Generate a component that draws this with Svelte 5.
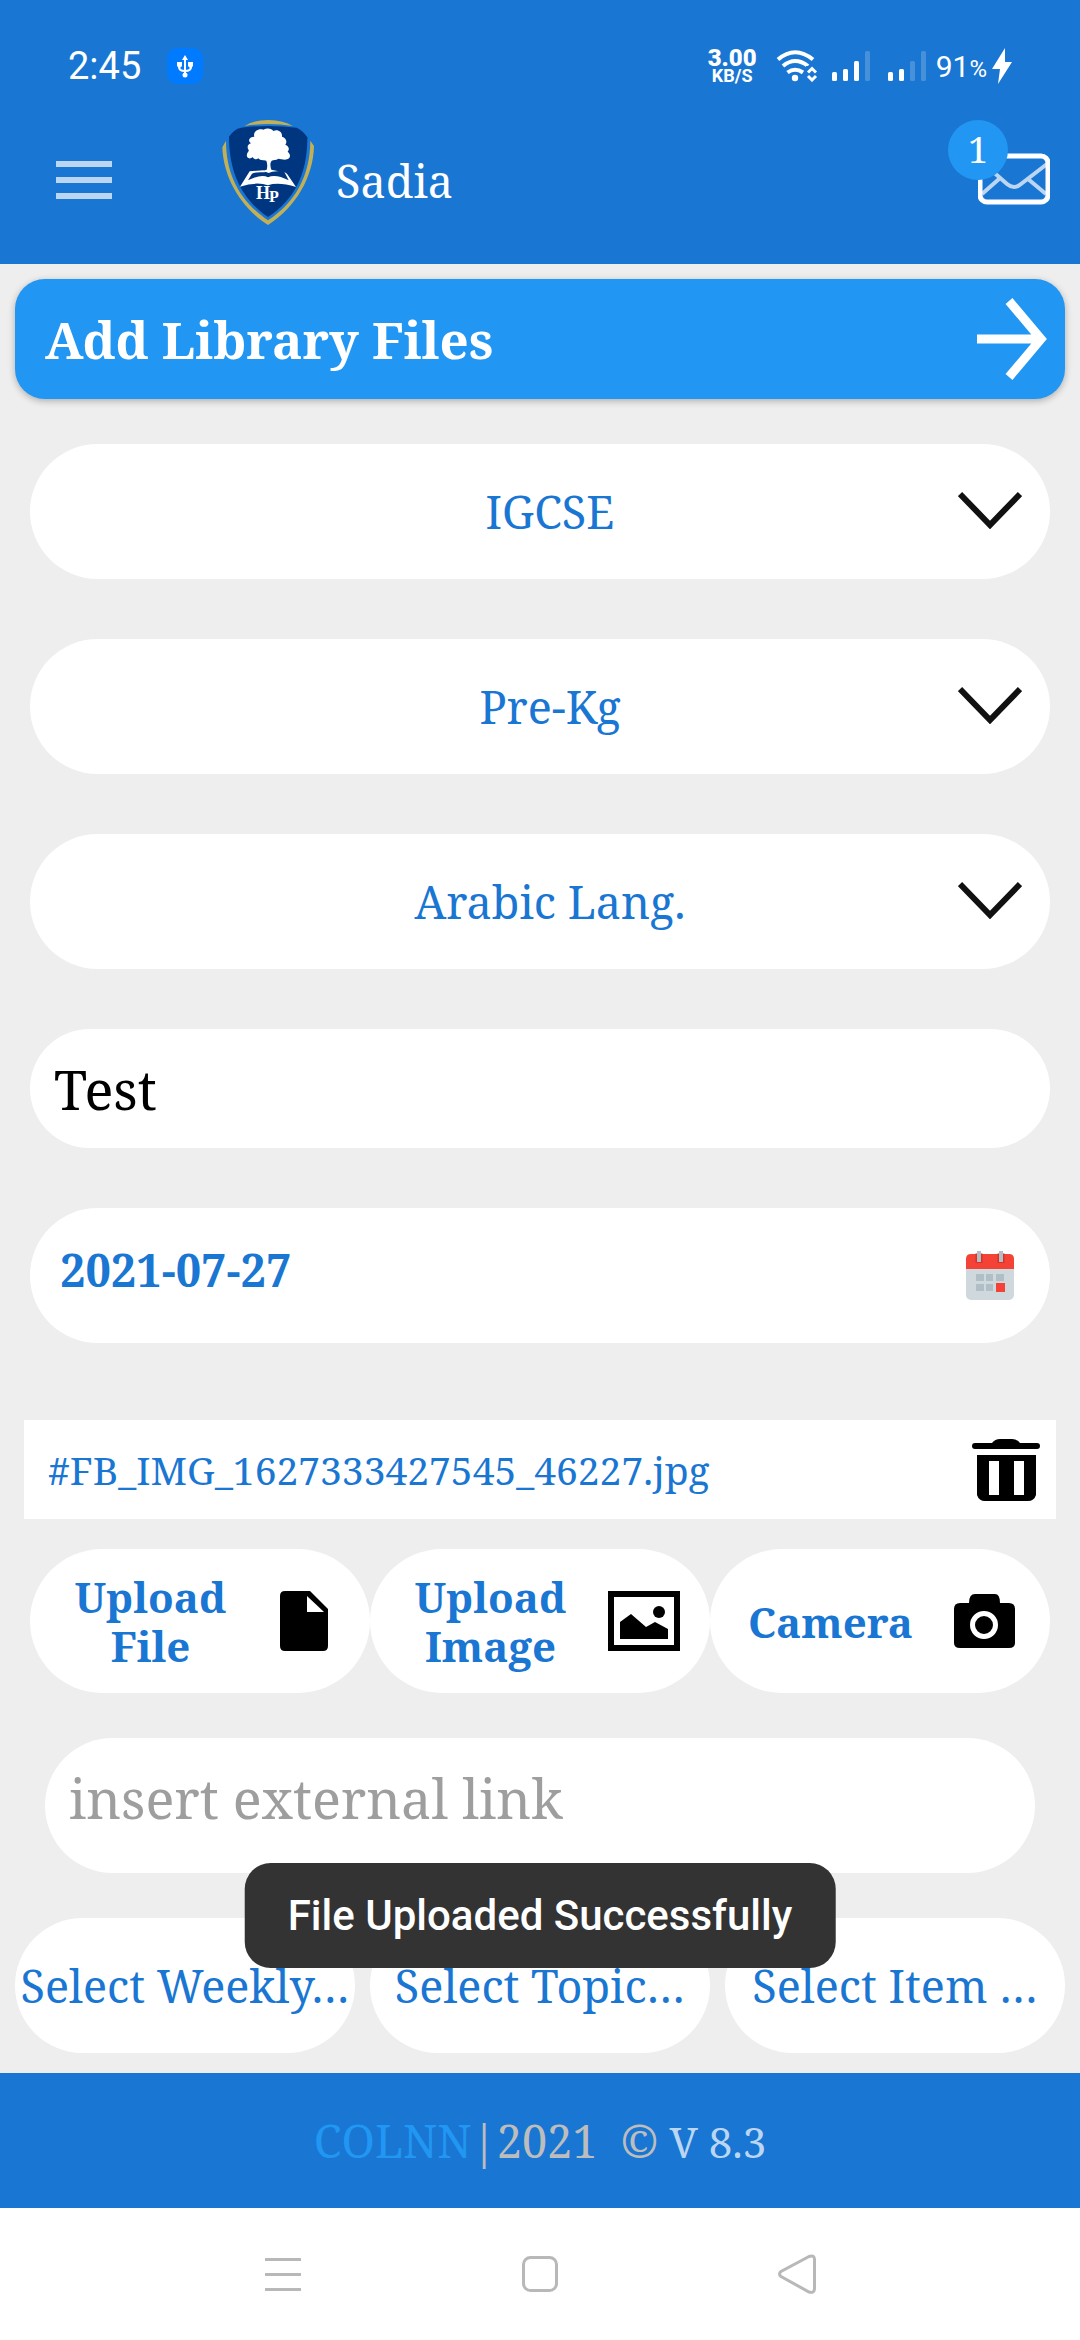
<script>
  const pickers = [
    { id: 'system', label: 'School system', value: 'IGCSE' },
    { id: 'grade', label: 'Grade', value: 'Pre-Kg' },
    { id: 'subject', label: 'Subject', value: 'Arabic Lang.' }
  ];
  const uploads = [
    { icon: 'file', text: 'Upload File' },
    { icon: 'image', text: 'Upload Image' },
    { icon: 'camera', text: 'Camera' }
  ];
  const filters = [
    { id: 'weekly', label: 'Weekly plan', value: 'Select Weekly…' },
    { id: 'topic', label: 'Topic', value: 'Select Topic…' },
    { id: 'item', label: 'Item', value: 'Select Item …' }
  ];
  let title = $state('Test');
  let date = $state('2021-07-27');
  let link = $state('');
</script>

<div class="screen">
  <header>
    <div class="status">
      <div class="status-side">
        <span class="clock">2:45</span>
        <svg class="usb" viewBox="0 0 36 36" aria-hidden="true">
          <rect width="36" height="36" rx="10" fill="#007aff" />
          <g fill="none" stroke="#fff" stroke-width="2"><path d="M18 10v17M12 17v2q0 4 6 4t6-4v-2" /></g>
          <path d="M18 7l3 5h-6zM10 14h5v4l-2 2h-1l-2-2zM21 14h5v4l-2 2h-1l-2-2z" fill="#fff" />
          <circle cx="18" cy="27" r="2.5" fill="#fff" />
        </svg>
      </div>
      <div class="status-side right">
        <span class="speed"><b>3.00</b><small>KB/S</small></span>
        <svg class="wifi" viewBox="0 0 42 32" aria-hidden="true">
          <g fill="none" stroke="#fff" stroke-width="4">
            <path d="M2 9.500Q19 -5 37 9.500M7 16Q19 6 32 16M11.500 22.500Q19 17 27 22.500" />
          </g>
          <circle cx="19" cy="28" r="3.200" fill="#fff" />
          <rect x="30" y="16" width="12" height="16" fill="#1976d2" />
          <path d="M32 22.500l4-4 4 4M32 26l4 4 4-4" fill="none" stroke="#fff" stroke-width="3" />
        </svg>
        <svg class="bars" viewBox="0 0 96 32" fill="#fff" aria-hidden="true">
          <rect x="0" y="22" width="5" height="9" rx="1.500" />
          <rect x="11" y="19" width="5" height="12" rx="1.500" />
          <rect x="22" y="11" width="5" height="20" rx="1.500" />
          <rect x="33" y="1" width="5" height="30" rx="1.500" opacity=".2" />
          <rect x="56" y="22" width="5" height="9" rx="1.500" />
          <rect x="67" y="19" width="5" height="12" rx="1.500" />
          <rect x="78" y="11" width="5" height="20" rx="1.500" opacity=".2" />
          <rect x="89" y="1" width="5" height="30" rx="1.500" opacity=".2" />
        </svg>
        <span class="battery">91<small>%</small></span>
        <svg class="bolt" viewBox="0 0 20 36" aria-hidden="true"><path d="M13 0L0 21h8L6 36 20 14h-7z" fill="#fff" /></svg>
      </div>
    </div>

    <div class="toolbar">
      <button class="menu" aria-label="Open menu">
        <svg viewBox="0 0 56 38" fill="#bbd6f2"><path d="M0 0h56v6H0zM0 16h56v6H0zM0 32h56v6H0z" /></svg>
      </button>
      <svg class="logo" viewBox="36 30 276 360" role="img" aria-label="School crest">
        <g fill="#c3b056">
          <path d="M104 48Q128 31 175 30Q222 31 248 48Q212 42 175 42Q138 42 104 48z" />
          <path d="M48 92L37 112C40 200 90 292 174 345C258 292 310 200 312 108L301 92C300 200 255 277 174 331C95 277 48 200 48 92z" />
        </g>
        <path d="M57 80Q72 57 93 53Q175 43 260 53Q279 62 292 82C292 195 252 270 174 321C98 270 57 190 57 80z" fill="#003580" />
        <g fill="#fff">
          <path d="M133 80C128 65 145 54 160 59C172 52 186 56 190 63C202 56 218 65 216 80C228 83 233 95 226 104C236 108 240 118 233 125C243 132 242 146 231 148C222 151 212 146 205 146C198 151 190 149 185 152C179 160 181 170 184 179L206 184Q186 183 176 189Q166 183 145 186L170 179Q174 166 169 152C160 151 150 152 145 145C137 151 128 145 129 141C119 149 108 145 111 133C112 126 118 124 116 120C110 112 113 102 123 100C111 91 119 80 133 80z" />
          <path d="M119 184L160 181L165 187Q135 185 126 191L114 211Q155 190 174 202Q196 190 236 211L223 186L231 191L258 231Q205 215 174 226Q140 214 90 230z" />
        </g>
        <text x="138" y="268" class="crest-h">H</text>
        <text x="177" y="276" class="crest-p">P</text>
      </svg>
      <h1>Sadia</h1>
      <button class="mail" aria-label="Messages, 1 unread">
        <svg viewBox="0 0 72 54" fill="none" stroke="#fff">
          <rect x="2" y="3" width="68" height="46" rx="7" stroke-width="5" />
          <path d="M4 9L29 31Q36 37 43 31L69 11M4 41L21 26M50 26L68 41" stroke-width="4" opacity=".7" />
        </svg>
        <span class="badge">1</span>
      </button>
    </div>
  </header>

  <main>
    <button class="banner">
      <span>Add Library Files</span>
      <svg viewBox="0 0 70 84" aria-hidden="true"><path d="M0 42H64M32 4L64 42L32 80" fill="none" stroke="#fff" stroke-width="9" /></svg>
    </button>

    <div class="fields">
      {#each pickers as p}
        <div class="pill picker">
          <select id={p.id} aria-label={p.label}><option>{p.value}</option></select>
          <svg viewBox="0 0 64 38" aria-hidden="true"><path d="M2 3L32 34L62 3" fill="none" stroke="#111" stroke-width="6" /></svg>
        </div>
      {/each}
      <input class="pill title" aria-label="Title" type="text" bind:value={title} />
      <div class="pill date">
        <input aria-label="Date" type="text" bind:value={date} />
        <button aria-label="Pick a date">
          <svg viewBox="0 0 48 50">
            <rect y="4" width="48" height="45" rx="5" fill="#cfd8dc" />
            <path d="M0 18V8q0-5 5-5h38q5 0 5 5v10z" fill="#f44336" />
            <path d="M13 2v10M35 2v10" stroke="#b71c1c" stroke-width="7" opacity=".45" />
            <path d="M13 0v11M35 0v11" stroke="#b0bec5" stroke-width="4" />
            <path d="M10 23h8v7h-8zM20 23h7v7h-7zM30 23h8v7h-8zM10 33h8v7h-8zM20 33h7v7h-7z" fill="#b0bec5" />
            <path d="M30 32h9v9h-9z" fill="#f44336" />
          </svg>
        </button>
      </div>
    </div>

    <div class="attachment">
      <a href="#file">#FB_IMG_1627333427545_46227.jpg</a>
      <button aria-label="Delete file">
        <svg viewBox="0 0 68 62"><path fill-rule="evenodd" d="M20 4q3-4 8-4h12q5 0 8 4h17q3 0 3 3t-3 3H3q-3 0-3-3t3-3zM5 16h59v40q-2 6-8 6H13q-6 0-8-6zM17 22v34h10V22zM42 22v34h10V22z" /></svg>
      </button>
    </div>

    <div class="uploads">
      {#each uploads as u}
        <button class="pill">
          <span>{u.text}</span>
          {#if u.icon === 'file'}
            <svg viewBox="0 0 72 60" aria-hidden="true"><path fill-rule="evenodd" d="M17 0h25l18 18v37q0 5-5 5H17q-5 0-5-5V5q0-5 5-5zM39 5v16h17z" /></svg>
          {:else if u.icon === 'image'}
            <svg viewBox="0 0 72 60" aria-hidden="true">
              <path fill-rule="evenodd" d="M0 0h72v60H0zM6 6v48h60V6z" />
              <path d="M12 48V31l11-8 15 13 9-5 13 7v10z" /><circle cx="51" cy="21" r="6" />
            </svg>
          {:else}
            <svg viewBox="0 0 72 60" aria-hidden="true">
              <path d="M21 3h20q5 0 5 9h9q6 0 6 6v34q0 5-6 5H6q-6 0-6-5V18q0-6 6-6h9q0-9 6-9z" transform="translate(6)" />
              <circle cx="36" cy="34" r="11.500" fill="none" stroke="#fff" stroke-width="5" />
            </svg>
          {/if}
        </button>
      {/each}
    </div>

    <div class="link-row">
      <input class="pill" type="url" aria-label="External link" placeholder="insert external link" bind:value={link} />
    </div>

    <div class="filters">
      {#each filters as f}
        <select class="pill" id={f.id} aria-label={f.label}><option>{f.value}</option></select>
      {/each}
      <div class="toast" role="status">File Uploaded Successfully</div>
    </div>
  </main>

  <footer>
    <p><span class="brand">COLNN</span><span>|</span><span>2021</span><span class="copy">©</span><span class="version">V 8.3</span></p>
  </footer>

  <nav>
    <button aria-label="Recent apps"><svg viewBox="0 0 40 40" fill="#b8b8b8"><path d="M2 4h36v3H2zM2 19h36v3H2zM2 34h36v3H2z" /></svg></button>
    <button aria-label="Home"><svg viewBox="0 0 40 40"><rect x="3.500" y="3.500" width="33" height="33" rx="7" /></svg></button>
    <button aria-label="Back"><svg viewBox="0 0 40 40"><path d="M32 2.500L4 17.500Q1 20 4 22.500L32 38Q37 39.500 37.500 35V5Q37 .500 32 2.500z" /></svg></button>
  </nav>
</div>

<style>
  :global(body) {
    margin: 0;
  }
  .screen {
    min-height: 100vh;
    display: flex;
    flex-direction: column;
    background: #eee;
    color: #1976d2;
    font-family: 'Noto Serif', 'Droid Serif', 'DejaVu Serif Condensed', 'DejaVu Serif', serif;
    font-size: 45px;
  }
  button,
  input,
  select {
    box-sizing: border-box;
    margin: 0;
    padding: 0;
    border: 0;
    outline: 0;
    background: none;
    color: inherit;
    font: inherit;
    appearance: none;
  }
  svg {
    display: block;
    flex: none;
  }
  header {
    background: #1976d2;
    color: #fff;
  }
  .status {
    display: flex;
    justify-content: space-between;
    align-items: center;
    height: 36px;
    padding: 48px 68px 12px;
    font-family: Roboto, sans-serif;
  }
  .status-side {
    display: flex;
    align-items: center;
    gap: 26px;
  }
  .right {
    gap: 0;
  }
  .clock {
    font-size: 38px;
  }
  .usb {
    width: 36px;
    height: 36px;
  }
  .speed {
    display: flex;
    flex-direction: column;
    align-items: center;
    font-size: 24px;
    line-height: 20px;
    font-weight: 700;
  }
  .speed small {
    font-size: 18px;
    line-height: 16px;
  }
  .wifi {
    width: 42px;
    height: 32px;
    margin: 0 14px 0 19px;
  }
  .bars {
    width: 96px;
    height: 32px;
  }
  .battery {
    margin: 0 5px 0 8px;
    font-size: 30px;
  }
  .battery small {
    font-size: 24px;
  }
  .bolt {
    width: 20px;
    height: 36px;
  }
  .toolbar {
    display: flex;
    align-items: center;
    height: 168px;
    padding: 0 30px 0 56px;
  }
  .menu svg {
    width: 56px;
    height: 38px;
  }
  .logo {
    width: 92px;
    height: 120px;
    margin: 0 22px 0 110px;
  }
  .crest-h,
  .crest-p {
    fill: #fff;
    font-family: 'Liberation Serif', serif;
    font-size: 54px;
    font-weight: 700;
  }
  .crest-p {
    font-size: 48px;
  }
  h1 {
    margin: 0;
    flex: 1;
    font-size: 45px;
    font-weight: 400;
  }
  .mail {
    position: relative;
  }
  .mail svg {
    width: 72px;
    height: 54px;
  }
  .badge {
    position: absolute;
    top: -33px;
    left: -30px;
    width: 60px;
    height: 60px;
    border-radius: 50%;
    background: #2196f3;
    font-size: 36px;
    line-height: 60px;
    text-align: center;
  }
  main {
    flex: 1;
    display: flex;
    flex-direction: column;
    padding: 15px 15px 20px;
  }
  .banner {
    display: flex;
    align-items: center;
    justify-content: space-between;
    height: 120px;
    padding: 0 18px 0 30px;
    border-radius: 30px;
    background: #2196f3;
    box-shadow: 0 2px 7px rgba(0, 0, 0, 0.28);
    color: #fff;
    font-size: 51px;
    font-weight: 700;
  }
  .banner svg {
    width: 70px;
    height: 84px;
  }
  .pill {
    height: 135px;
    border-radius: 72px;
    background: #fff;
  }
  .fields {
    display: flex;
    flex-direction: column;
    gap: 60px;
    padding: 45px 15px 0;
  }
  .picker {
    position: relative;
  }
  .picker select {
    width: 100%;
    height: 100%;
    padding-left: 20px;
    text-align: center;
    text-align-last: center;
  }
  .picker svg {
    position: absolute;
    right: 28px;
    top: 47px;
    width: 64px;
    height: 38px;
    pointer-events: none;
  }
  .title {
    height: 119px;
    padding: 0 24px;
    color: #000;
    font-size: 54px;
  }
  .date {
    display: flex;
    align-items: center;
    justify-content: space-between;
    padding: 0 36px 0 30px;
  }
  .date input {
    flex: 1;
    min-width: 0;
    padding-bottom: 12px;
    font-weight: 700;
  }
  .date svg {
    width: 48px;
    height: 50px;
  }
  .attachment {
    display: flex;
    align-items: center;
    justify-content: space-between;
    height: 99px;
    margin: 77px 9px 30px;
    padding: 0 16px 0 24px;
    background: #fff;
    font-size: 39px;
  }
  .attachment a {
    color: inherit;
    text-decoration: none;
  }
  .attachment svg {
    width: 68px;
    height: 62px;
  }
  .uploads {
    display: grid;
    grid-template-columns: repeat(3, 1fr);
    padding: 0 15px;
  }
  .uploads button {
    display: flex;
    align-items: center;
    gap: 12px;
    height: 144px;
    padding: 0 30px 0 15px;
    font-size: 42px;
    line-height: 49px;
    font-weight: 700;
  }
  .uploads span {
    flex: 1;
  }
  .uploads svg {
    width: 72px;
    height: 60px;
  }
  .link-row {
    display: flex;
    padding: 45px 30px;
  }
  .link-row input {
    flex: 1;
    min-width: 0;
    padding: 0 24px 15px;
    font-size: 54px;
  }
  .link-row input::placeholder {
    color: #9e9e9e;
    opacity: 1;
  }
  .filters {
    position: relative;
    display: grid;
    grid-template-columns: repeat(3, 1fr);
    gap: 15px;
  }
  .filters select {
    min-width: 0;
    text-align: center;
    text-align-last: center;
  }
  .toast {
    position: absolute;
    top: -55px;
    left: 50%;
    transform: translateX(-50%);
    padding: 1px 43px 0;
    border-radius: 26px;
    background: #333;
    color: #fff;
    font-family: Roboto, sans-serif;
    font-size: 42px;
    font-weight: 500;
    line-height: 104px;
    white-space: nowrap;
  }
  footer {
    display: flex;
    align-items: center;
    justify-content: center;
    height: 135px;
    background: #1976d2;
    color: #bdbdbd;
  }
  footer p {
    display: flex;
    align-items: baseline;
    margin: 0;
  }
  .brand {
    color: #2196f3;
  }
  .copy {
    margin: 0 11px 0 23px;
  }
  .version {
    color: #bbd6f2;
    font-size: 42px;
  }
  nav {
    display: flex;
    justify-content: center;
    height: 132px;
    background: #fff;
  }
  nav button {
    display: grid;
    place-items: center;
    width: 257px;
  }
  nav svg {
    width: 40px;
    height: 40px;
    fill: none;
    stroke: #b8b8b8;
    stroke-width: 3px;
  }
  nav button:first-child svg {
    fill: #b8b8b8;
    stroke: none;
  }
</style>
